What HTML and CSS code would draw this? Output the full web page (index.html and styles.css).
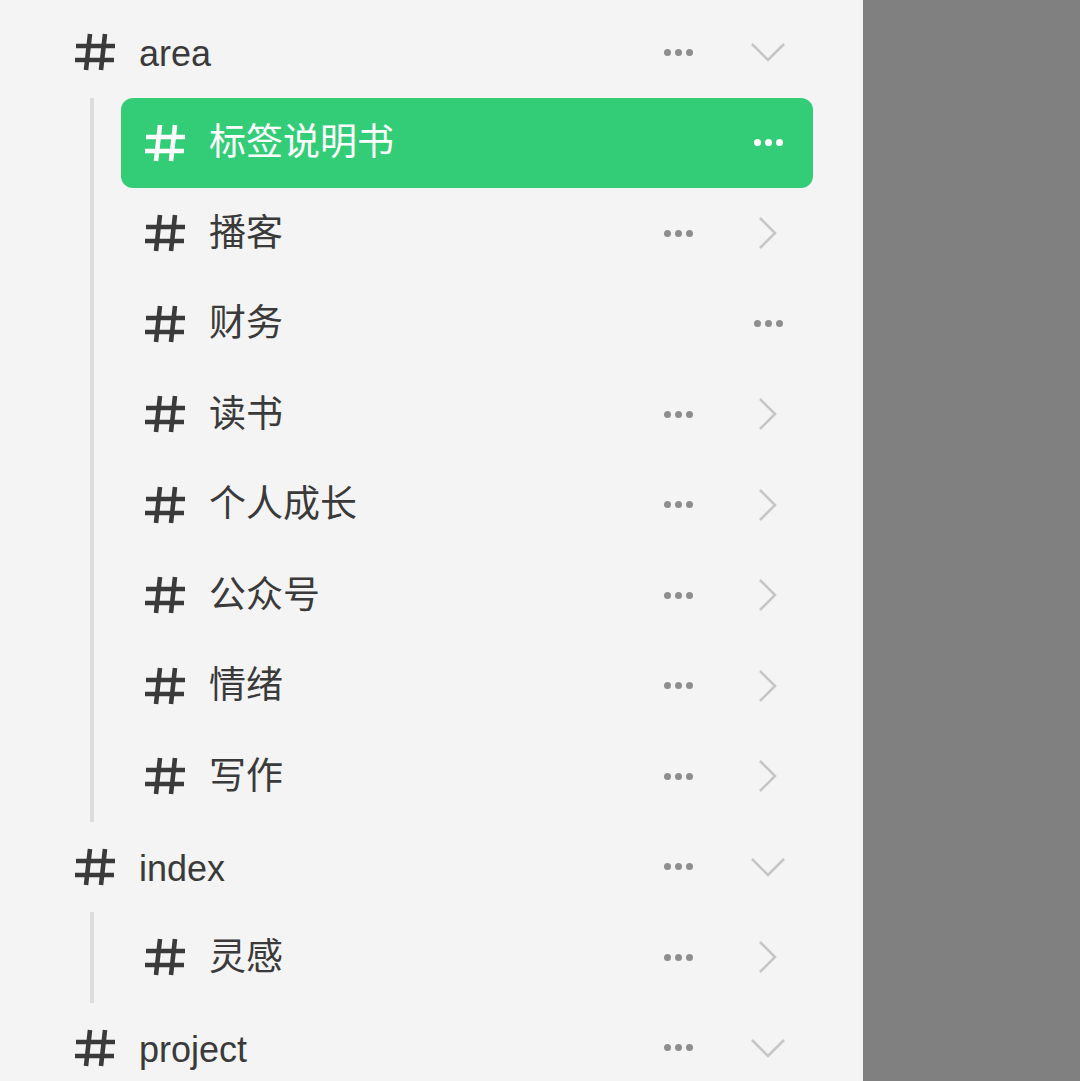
FILE: index.html
```html
<!DOCTYPE html>
<html lang="zh-CN">
<head>
  <meta charset="UTF-8">
  <title>标签</title>
  <link rel="stylesheet" href="styles.css">
</head>
<body>

<div class="page">
  <div class="sidebar">

    <div class="row top">
      <svg class="hash" viewBox="0 0 40 38"><path d="M15 1 L11 37 M30 1 L26 37 M1 13 H40 M0 27 H39"/></svg>
      <span class="name">area</span>
      <span class="dots"><i></i><i></i><i></i></span>
      <svg class="chev" viewBox="0 0 34 20"><path d="M1 2 L17 18 L33 2"/></svg>
    </div>

    <div class="group">
      <div class="row child active">
        <svg class="hash" viewBox="0 0 40 38"><path d="M15 1 L11 37 M30 1 L26 37 M1 13 H40 M0 27 H39"/></svg>
        <span class="name">标签说明书</span>
        <span class="dots last"><i></i><i></i><i></i></span>
      </div>
      <div class="row child">
        <svg class="hash" viewBox="0 0 40 38"><path d="M15 1 L11 37 M30 1 L26 37 M1 13 H40 M0 27 H39"/></svg>
        <span class="name">播客</span>
        <span class="dots"><i></i><i></i><i></i></span>
        <svg class="chev" viewBox="0 0 34 32"><path d="M9 1 L24 16 L9 31"/></svg>
      </div>
      <div class="row child">
        <svg class="hash" viewBox="0 0 40 38"><path d="M15 1 L11 37 M30 1 L26 37 M1 13 H40 M0 27 H39"/></svg>
        <span class="name">财务</span>
        <span class="dots last"><i></i><i></i><i></i></span>
      </div>
      <div class="row child">
        <svg class="hash" viewBox="0 0 40 38"><path d="M15 1 L11 37 M30 1 L26 37 M1 13 H40 M0 27 H39"/></svg>
        <span class="name">读书</span>
        <span class="dots"><i></i><i></i><i></i></span>
        <svg class="chev" viewBox="0 0 34 32"><path d="M9 1 L24 16 L9 31"/></svg>
      </div>
      <div class="row child">
        <svg class="hash" viewBox="0 0 40 38"><path d="M15 1 L11 37 M30 1 L26 37 M1 13 H40 M0 27 H39"/></svg>
        <span class="name">个人成长</span>
        <span class="dots"><i></i><i></i><i></i></span>
        <svg class="chev" viewBox="0 0 34 32"><path d="M9 1 L24 16 L9 31"/></svg>
      </div>
      <div class="row child">
        <svg class="hash" viewBox="0 0 40 38"><path d="M15 1 L11 37 M30 1 L26 37 M1 13 H40 M0 27 H39"/></svg>
        <span class="name">公众号</span>
        <span class="dots"><i></i><i></i><i></i></span>
        <svg class="chev" viewBox="0 0 34 32"><path d="M9 1 L24 16 L9 31"/></svg>
      </div>
      <div class="row child">
        <svg class="hash" viewBox="0 0 40 38"><path d="M15 1 L11 37 M30 1 L26 37 M1 13 H40 M0 27 H39"/></svg>
        <span class="name">情绪</span>
        <span class="dots"><i></i><i></i><i></i></span>
        <svg class="chev" viewBox="0 0 34 32"><path d="M9 1 L24 16 L9 31"/></svg>
      </div>
      <div class="row child">
        <svg class="hash" viewBox="0 0 40 38"><path d="M15 1 L11 37 M30 1 L26 37 M1 13 H40 M0 27 H39"/></svg>
        <span class="name">写作</span>
        <span class="dots"><i></i><i></i><i></i></span>
        <svg class="chev" viewBox="0 0 34 32"><path d="M9 1 L24 16 L9 31"/></svg>
      </div>
    </div>

    <div class="row top">
      <svg class="hash" viewBox="0 0 40 38"><path d="M15 1 L11 37 M30 1 L26 37 M1 13 H40 M0 27 H39"/></svg>
      <span class="name">index</span>
      <span class="dots"><i></i><i></i><i></i></span>
      <svg class="chev" viewBox="0 0 34 20"><path d="M1 2 L17 18 L33 2"/></svg>
    </div>

    <div class="group">
      <div class="row child">
        <svg class="hash" viewBox="0 0 40 38"><path d="M15 1 L11 37 M30 1 L26 37 M1 13 H40 M0 27 H39"/></svg>
        <span class="name">灵感</span>
        <span class="dots"><i></i><i></i><i></i></span>
        <svg class="chev" viewBox="0 0 34 32"><path d="M9 1 L24 16 L9 31"/></svg>
      </div>
    </div>

    <div class="row top">
      <svg class="hash" viewBox="0 0 40 38"><path d="M15 1 L11 37 M30 1 L26 37 M1 13 H40 M0 27 H39"/></svg>
      <span class="name">project</span>
      <span class="dots"><i></i><i></i><i></i></span>
      <svg class="chev" viewBox="0 0 34 20"><path d="M1 2 L17 18 L33 2"/></svg>
    </div>

  </div>
  <div class="backdrop"></div>
</div>

</body>
</html>
```

FILE: styles.css
```css
html, body {
  margin: 0;
  height: 100%;
  overflow: hidden;
}

body {
  font-family: "Liberation Sans", "Noto Sans CJK SC", sans-serif;
  color: #3a3a3a;
}

.page {
  display: flex;
  height: 1081px;
}

.sidebar {
  width: 863px;
  flex: none;
  background: #f4f4f5;
  padding-top: 7px;
  box-sizing: border-box;
  overflow: hidden;
}

.backdrop {
  flex: 1;
  background: #808080;
}

.row {
  display: flex;
  align-items: center;
  height: 90.5px;
  width: 813px;
  box-sizing: border-box;
  padding-right: 25px;
  font-size: 36px;
}

.row.top {
  padding-left: 75px;
}

.group {
  margin-left: 90px;
  border-left: 4px solid #dcdcdc;
}

.row.child {
  margin-left: 27px;
  width: 692px;
  padding-left: 24px;
  border-radius: 12px;
  font-size: 37px;
}

.row.active {
  background: #33cd77;
  color: #fff;
}

.hash {
  width: 40px;
  height: 38px;
  flex: none;
  fill: none;
  stroke: #3a3a3a;
  stroke-width: 4.6;
}

.row.active .hash {
  stroke: #fff;
}

.name {
  margin-left: 24px;
  flex: 1;
  line-height: 1;
}

.row.top .name {
  margin-left: 24px;
  position: relative;
  top: 2px;
}

.dots {
  width: 40px;
  display: flex;
  justify-content: center;
  gap: 4px;
  margin-right: 50px;
}

.dots.last {
  margin-right: 0;
}

.dots i {
  width: 7px;
  height: 7px;
  border-radius: 50%;
  background: #8e8e8e;
}

.row.active .dots i {
  background: #fff;
}

.chev {
  width: 40px;
  flex: none;
  fill: none;
  stroke: #c6c6c6;
  stroke-width: 2.6;
}

.row.top .chev {
  height: 20px;
}

.row.child .chev {
  height: 32px;
}
```
